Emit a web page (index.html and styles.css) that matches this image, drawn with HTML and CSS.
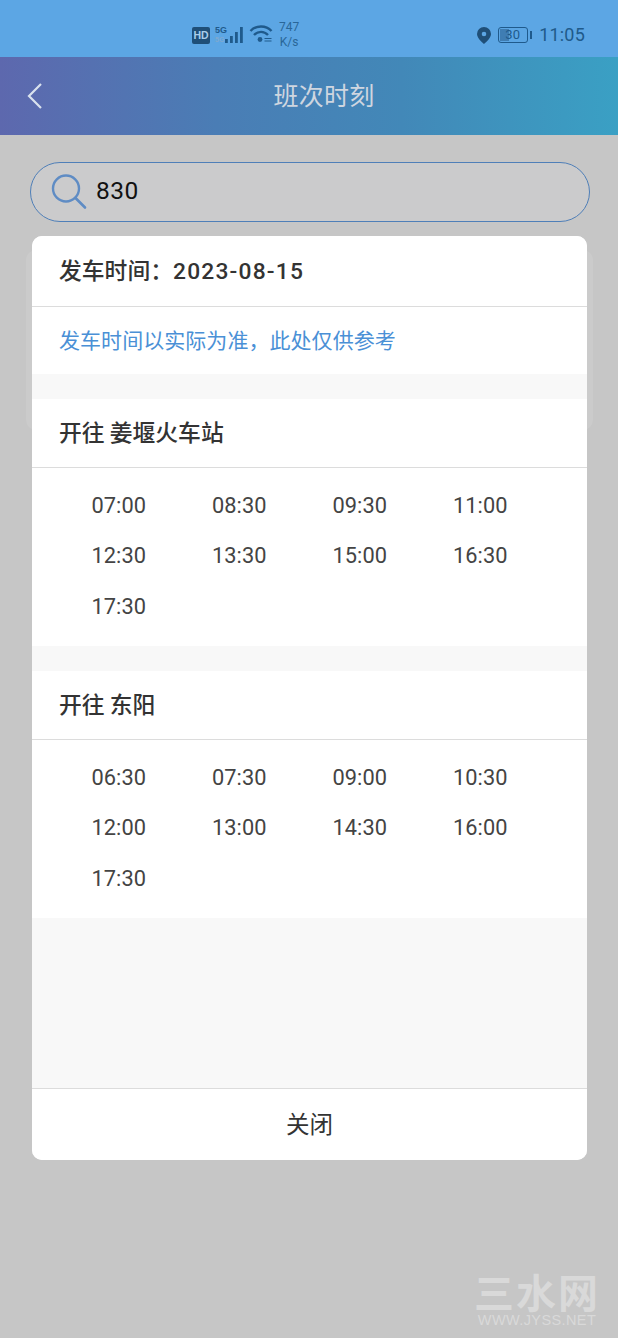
FILE: index.html
```html
<!DOCTYPE html>
<html lang="zh-CN">
<head>
<meta charset="utf-8">
<title>班次时刻</title>
<link rel="stylesheet" href="styles.css">
</head>
<body>
<div class="app">
  <div class="status">
    <div class="status-left">
      <span class="hd">HD</span>
      <span class="net"><span class="net-top">5G</span><span class="net-bottom">5G</span></span>
      <svg class="signal" width="22" height="18" viewBox="0 0 22 18"><g fill="#1f5a8c"><rect x="1" y="13" width="2.800" height="4"/><rect x="6" y="10" width="2.800" height="7"/><rect x="11" y="6" width="2.800" height="11"/><rect x="16" y="1" width="2.800" height="16"/></g></svg>
      <svg class="wifi" width="24" height="20" viewBox="0 0 24 20"><g fill="none" stroke="#1f5a8c" stroke-width="2.400"><path d="M1.500 7C7 1 17 1 22.500 7"/><path d="M5 11C9 6.800 15 6.800 19 11"/></g><circle cx="11" cy="15.500" r="2.400" fill="#1f5a8c"/><path d="M15.500 14.500h7M15.500 17h7" fill="none" stroke="#1f5a8c" stroke-width="1.200"/></svg>
      <span class="speed"><span>747</span><span>K/s</span></span>
    </div>
    <div class="status-right">
      <svg class="pin" width="16" height="19" viewBox="0 0 16 19"><path fill-rule="evenodd" fill="#1f4f78" d="M8 1a7 7 0 0 1 7 7C15 12.500 8 18 8 18S1 12.500 1 8A7 7 0 0 1 8 1zm0 4.700a2.300 2.300 0 1 0 0 4.600 2.300 2.300 0 0 0 0-4.600z"/></svg>
      <span class="battery"><span class="battery-body"><span class="battery-fill"></span><span class="battery-num">30</span></span><span class="battery-tip"></span></span>
      <span class="clock">11:05</span>
    </div>
  </div>
  <header class="nav">
    <svg class="back" width="18" height="28" viewBox="0 0 18 28"><path d="M15 2L3 14l12 12" fill="none" stroke="#d9e2ee" stroke-width="2.200"/></svg>
    <h1 class="nav-title">班次时刻</h1>
  </header>
  <main class="page">
    <div class="search">
      <svg class="search-icon" width="36" height="36" viewBox="0 0 36 36"><circle cx="15" cy="14.500" r="13" fill="none" stroke="#5f8cc4" stroke-width="2.400"/><path d="M24.500 24l9.500 9.500" stroke="#5f8cc4" stroke-width="2.600" stroke-linecap="round"/></svg>
      <span class="search-value">830</span>
    </div>
    <div class="under-card"></div>
  </main>

  <section class="modal">
    <div class="modal-head">发车时间：<span class="date">2023-08-15</span></div>
    <div class="notice">发车时间以实际为准，此处仅供参考</div>
    <div class="scroll">
      <div class="route">
        <h2 class="route-title">开往 姜堰火车站</h2>
        <div class="times">
          <span>07:00</span><span>08:30</span><span>09:30</span><span>11:00</span>
          <span>12:30</span><span>13:30</span><span>15:00</span><span>16:30</span>
          <span>17:30</span>
        </div>
      </div>
      <div class="route">
        <h2 class="route-title">开往 东阳</h2>
        <div class="times">
          <span>06:30</span><span>07:30</span><span>09:00</span><span>10:30</span>
          <span>12:00</span><span>13:00</span><span>14:30</span><span>16:00</span>
          <span>17:30</span>
        </div>
      </div>
    </div>
    <div class="close">关闭</div>
  </section>

  <div class="watermark">
    <span class="wm-cn">三水网</span>
    <span class="wm-en">WWW.JYSS.NET</span>
  </div>
</div>
</body>
</html>
```

FILE: styles.css
```css
* { box-sizing: border-box; }
html, body { margin: 0; padding: 0; }
body { font-family: "Noto Sans CJK SC", "Noto Sans", sans-serif; background: #c6c6c6; }

.app { position: relative; width: 618px; height: 1338px; overflow: hidden; display: flex; flex-direction: column; background: #c6c6c6; }

.status { height: 57px; flex: none; background: #5ca6e4; display: flex; justify-content: space-between; align-items: center; padding: 13px 33px 0 192px; color: #1f5a8c; }
.status-left, .status-right { display: flex; align-items: center; }
.hd { width: 18px; height: 17px; background: #1f4f78; color: #a9cdea; border-radius: 2px; font: 700 10.500px/17px "Liberation Sans", sans-serif; text-align: center; }
.net { display: flex; flex-direction: column; width: 12px; margin-left: 5px; font: 700 9px/9px "Liberation Sans", sans-serif; }
.net-bottom { color: #7fa9cf; font-size: 7px; }
.signal { margin-left: -3px; }
.wifi { margin: -3px 0 0 3px; }
.speed { display: flex; flex-direction: column; align-items: center; margin-left: 6px; font: 400 12px/15px "Roboto", sans-serif; color: #2a6698; }
.pin { margin-right: 6px; }
.battery { display: flex; align-items: center; margin-right: 7px; }
.battery-body { position: relative; width: 30px; height: 16px; border: 1.500px solid #1f5a8c; border-radius: 3px; display: block; }
.battery-fill { position: absolute; left: 1px; top: 1px; bottom: 1px; width: 9px; background: #3f7db3; }
.battery-num { position: absolute; inset: 0; text-align: center; font: 400 13px/13px "Roboto", sans-serif; color: #1f5a8c; }
.battery-tip { width: 2.500px; height: 8px; margin-left: 2px; background: #1f5a8c; }
.clock { font: 400 18px/24px "Roboto", sans-serif; color: #205a8a; letter-spacing: .2px; }

.nav { position: relative; height: 78px; flex: none; display: flex; align-items: center; justify-content: center; padding-left: 30px; background: linear-gradient(90deg, #5d68ae 0%, #4a7db5 35%, #4288b8 65%, #3aa0c4 100%); }
.back { position: absolute; left: 26px; top: 25px; }
.nav-title { margin: -4px 0 0; font-size: 25px; font-weight: 400; color: #cfd6e0; letter-spacing: .3px; }

.page { position: relative; flex: 1; background: #c6c6c6; }
.search { position: absolute; left: 30px; top: 27px; width: 560px; height: 60px; border: 1.500px solid #4f7fb8; border-radius: 30px; background: #cbcbcc; display: flex; align-items: center; padding-left: 20px; }
.search-icon { flex: none; }
.search-value { margin: -2px 0 0 9px; font: 400 24.500px/1 "Roboto", sans-serif; color: #111; letter-spacing: .5px; }
.under-card { position: absolute; left: 26px; top: 115px; width: 567px; height: 180px; background: #cbcbcb; border-radius: 10px; }

.modal { position: absolute; left: 32px; top: 236px; width: 555px; height: 924px; background: #f8f8f8; border-radius: 10px; overflow: hidden; display: flex; flex-direction: column; color: #333; }
.modal-head { height: 71px; flex: none; padding-left: 27px; background: #fff; border-bottom: 1px solid #dcdcdc; font-size: 22.800px; font-weight: 500; line-height: 67px; }
.date { font-family: "Roboto", sans-serif; letter-spacing: 1.200px; }
.notice { height: 67px; flex: none; padding-left: 27px; background: #fff; color: #4a90d6; font-size: 21px; line-height: 64px; letter-spacing: .05px; }
.scroll { flex: 1; display: flex; flex-direction: column; gap: 25px; padding-top: 25px; }
.route { background: #fff; }
.route-title { margin: 0; height: 69.200px; padding-left: 27px; border-bottom: 1px solid #dcdcdc; font-size: 22.800px; font-weight: 500; line-height: 65px; }
.times { height: 178px; padding: 12px 0 0 26.500px; display: grid; grid-template-columns: repeat(4, 120.500px); grid-auto-rows: 50.500px; justify-items: center; align-items: center; font: 400 21.800px/1 "Roboto", sans-serif; color: #444; align-content: start; }
.close { height: 72px; flex: none; background: #fff; border-top: 1px solid #dcdcdc; text-align: center; font-size: 23.500px; line-height: 68px; }

.watermark { position: absolute; left: 470px; top: 1270px; width: 134px; display: flex; flex-direction: column; align-items: center; color: #d9d9d9; }
.wm-cn { font-size: 40px; font-weight: 700; line-height: 42px; letter-spacing: 2px; white-space: nowrap; }
.wm-en { font: 400 14.500px/16px "Liberation Sans", sans-serif; letter-spacing: .4px; white-space: nowrap; }
```
